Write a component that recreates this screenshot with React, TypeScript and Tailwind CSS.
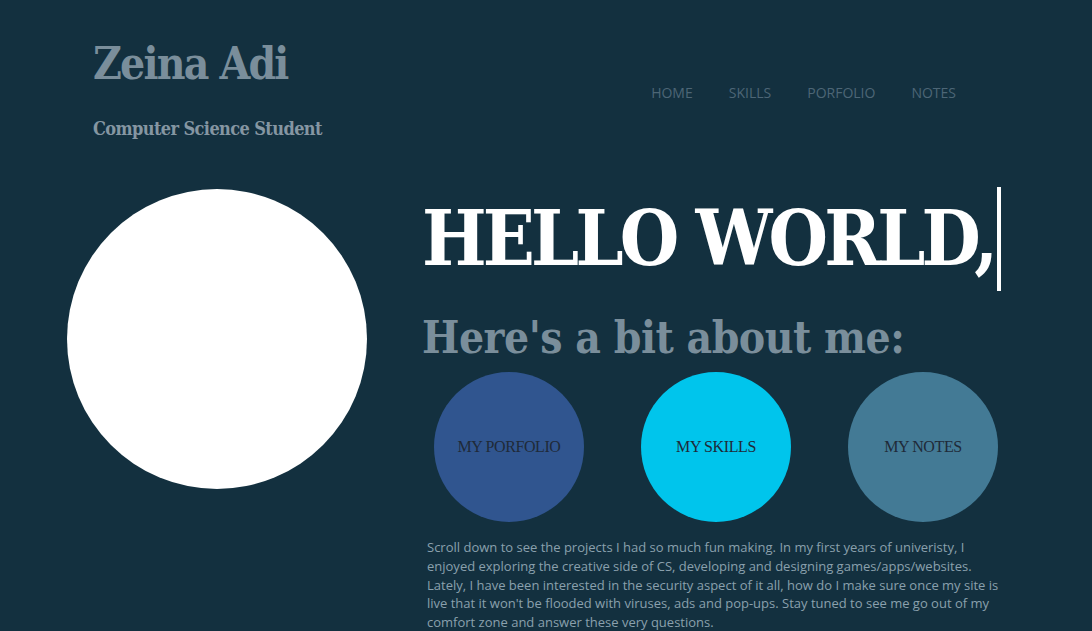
import React from "react";

export default function App() {
  return (
    <div className="w-full h-[631px] bg-[#13303f] overflow-hidden">
      <header className="flex justify-between">
        <div className="pl-[93px] pt-[42px]">
          <h1 className="font-['DejaVu_Serif','Liberation_Serif',serif] text-[44px] leading-none font-bold text-[#7a8e9b] font-stretch-condensed tracking-[-1.8px]">
            Zeina Adi
          </h1>
          <p className="font-['DejaVu_Serif','Liberation_Serif',serif] mt-[34px] text-[18px] leading-none font-bold text-[#8596a2] font-stretch-condensed tracking-[-0.6px]">
            Computer Science Student
          </p>
        </div>
        <nav className="font-['Open_Sans',sans-serif] flex gap-[36px] pr-[136px] pt-[83px] text-[14px] leading-[20px] text-[#4d6676]">
          <span>HOME</span>
          <span>SKILLS</span>
          <span>PORFOLIO</span>
          <span>NOTES</span>
        </nav>
      </header>

      <main className="flex mt-[49px]">
        <div className="ml-[67px] mt-[2px] w-[300px] h-[300px] rounded-full bg-white shrink-0" />
        <div className="ml-[55px] flex flex-col">
          <div>
            <h2 className="font-['DejaVu_Serif','Liberation_Serif',serif] inline-block text-[76px] leading-[104px] font-bold text-white border-r-4 border-white pr-[3px] font-stretch-condensed tracking-[-3.8px]">
              HELLO WORLD,
            </h2>
          </div>
          <h3 className="font-['DejaVu_Serif','Liberation_Serif',serif] mt-[25px] text-[44px] leading-none font-bold text-[#7a8e9b] font-stretch-condensed tracking-[-0.5px]">
            Here's a bit about me:
          </h3>
          <div className="flex gap-[57px] ml-[12px] mt-[12px]">
            <Circle color="bg-[#30558f]" label="MY PORFOLIO" />
            <Circle color="bg-[#00c5ec]" label="MY SKILLS" />
            <Circle color="bg-[#437a95]" label="MY NOTES" />
          </div>
          <p className="font-['Open_Sans',sans-serif] ml-[5px] mt-[16px] w-[580px] text-[13px] leading-[18.75px] text-[#8aa0ad]">
            Scroll down to see the projects I had so much fun making. In my first years of univeristy, I enjoyed exploring the creative side of CS, developing and designing games/apps/websites. Lately, I have been interested in the security aspect of it all, how do I make sure once my site is live that it won't be flooded with viruses, ads and pop-ups. Stay tuned to see me go out of my comfort zone and answer these very questions.
          </p>
        </div>
      </main>
    </div>
  );
}

function Circle({ color, label }: { color: string; label: string }) {
  return (
    <div className={`w-[150px] h-[150px] rounded-full ${color} flex items-center justify-center`}>
      <span className="font-['Liberation_Serif',serif] text-[16px] text-[#1f2a38] tracking-[-0.4px]">
        {label}
      </span>
    </div>
  );
}
